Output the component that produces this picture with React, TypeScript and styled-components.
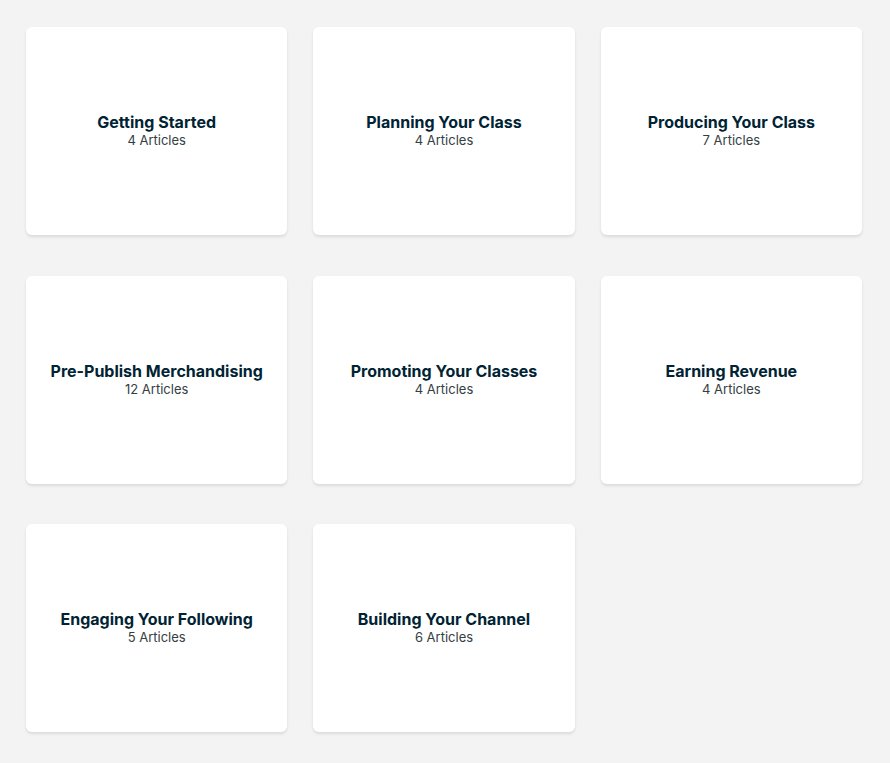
import React from "react";
import styled, { createGlobalStyle } from "styled-components";

const Global = createGlobalStyle`
  html, body { margin: 0; padding: 0; background: #f3f3f3; }
  body { font-family: Inter, "Open Sans", sans-serif; }
`;

const Page = styled.div`
  padding: 27px 28px 30px 26px;
`;

const Grid = styled.div`
  display: grid;
  grid-template-columns: repeat(3, 1fr);
  column-gap: 26px;
  row-gap: 40.5px;
`;

const Card = styled.a`
  display: flex;
  flex-direction: column;
  align-items: center;
  justify-content: center;
  height: 208px;
  background: #ffffff;
  border-radius: 6px;
  box-shadow: 0 2px 3px rgba(0, 0, 0, 0.1);
  text-decoration: none;
  box-sizing: border-box;
`;

const Title = styled.div`
  font-family: Inter, sans-serif;
  font-weight: 700;
  font-size: 16px;
  line-height: 19px;
  color: #002333;
  letter-spacing: 0;
`;

const Sub = styled.div`
  font-family: Inter, sans-serif;
  font-weight: 400;
  font-size: 13px;
  line-height: 17px;
  color: #34403f;
`;

const items = [
  ["Getting Started", 4],
  ["Planning Your Class", 4],
  ["Producing Your Class", 7],
  ["Pre-Publish Merchandising", 12],
  ["Promoting Your Classes", 4],
  ["Earning Revenue", 4],
  ["Engaging Your Following", 5],
  ["Building Your Channel", 6],
] as const;

export default function App() {
  return (
    <>
      <Global />
      <Page>
        <Grid>
          {items.map(([t, n]) => (
            <Card key={t} href="#">
              <Title>{t}</Title>
              <Sub>{n} Articles</Sub>
            </Card>
          ))}
        </Grid>
      </Page>
    </>
  );
}
